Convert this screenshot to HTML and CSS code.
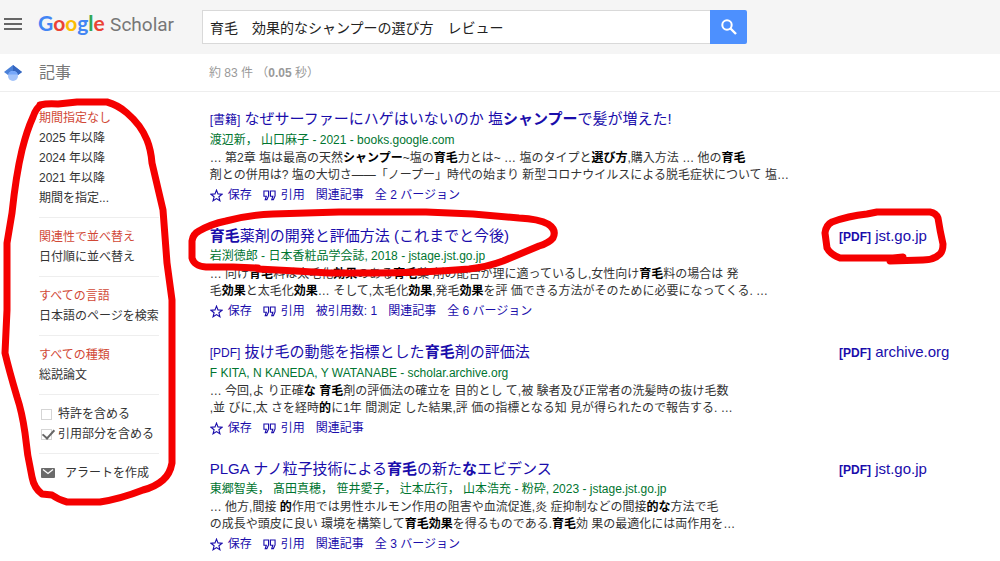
FILE: index.html
```html
<!DOCTYPE html>
<html lang="ja">
<head>
    <meta charset="UTF-8">
    <meta name="viewport" content="width=device-width, initial-scale=1.0">
    <title>Google Scholar</title>
    <link rel="stylesheet" href="styles.css">
</head>
<body>

    <!-- Shared icons -->
    <svg class="sprite" aria-hidden="true">
        <symbol id="star" viewBox="0 0 14 14">
            <path d="M7 1.2l1.6 4.1 4.4.3-3.4 2.8 1.1 4.3L7 10.3l-3.7 2.4 1.1-4.3L1 5.6l4.4-.3z" fill="none" stroke="currentColor" stroke-width="1.2"/>
        </symbol>
        <symbol id="quote" viewBox="0 0 14 14">
            <path d="M1 2.2h5v5.2L4.2 11.4H2.4L3.6 7.8H1zM8 2.2h5v5.2l-1.8 4H9.4l1.2-3.6H8z" fill="none" stroke="currentColor" stroke-width="1.2"/>
        </symbol>
    </svg>

    <header class="header">
        <div class="header-left">
            <button class="menu-btn" type="button" aria-label="メニュー">
                <svg width="18" height="14" viewBox="0 0 18 14"><path d="M0 2h18M0 7h18M0 12h18" stroke="#666" stroke-width="2"/></svg>
            </button>
            <a class="logo" href="#"><span class="google"><span class="blue">G</span><span class="red">o</span><span class="yellow">o</span><span class="blue">g</span><span class="green">l</span><span class="red">e</span></span> <span class="scholar">Scholar</span></a>
        </div>
        <form class="search">
            <input type="text" name="q" aria-label="検索" value="育毛　効果的なシャンプーの選び方　レビュー">
            <button type="submit" aria-label="検索">
                <svg width="18" height="18" viewBox="0 0 18 18"><circle cx="7" cy="7" r="4.7" fill="none" stroke="#fff" stroke-width="2"/><path d="M10.5 10.5l5.5 5.5" stroke="#fff" stroke-width="2.4"/></svg>
            </button>
        </form>
    </header>

    <div class="subheader">
        <div class="section-name">
            <svg width="18" height="18" viewBox="0 0 18 18">
                <path d="M9 1L0 8l4 3h10l4-3z" fill="#4a80d8"/>
                <path d="M9 1v7l5 3 4-3z" fill="#3566c0"/>
                <circle cx="9" cy="12" r="5" fill="#a3c3fa"/>
                <path d="M4.3 10.4a5 5 0 0 1 9.4 0z" fill="#76a7fa"/>
            </svg>
            <span>記事</span>
        </div>
        <div class="count">約 83 件 （<b>0.05</b> 秒）</div>
    </div>

    <main class="main">
        <nav class="sidebar">
            <ul>
                <li><a class="selected" href="#">期間指定なし</a></li>
                <li><a href="#">2025 年以降</a></li>
                <li><a href="#">2024 年以降</a></li>
                <li><a href="#">2021 年以降</a></li>
                <li><a href="#">期間を指定...</a></li>
            </ul>
            <ul>
                <li><a class="selected" href="#">関連性で並べ替え</a></li>
                <li><a href="#">日付順に並べ替え</a></li>
            </ul>
            <ul>
                <li><a class="selected" href="#">すべての言語</a></li>
                <li><a href="#">日本語のページを検索</a></li>
            </ul>
            <ul>
                <li><a class="selected" href="#">すべての種類</a></li>
                <li><a href="#">総説論文</a></li>
            </ul>
            <ul>
                <li><label><input type="checkbox">特許を含める</label></li>
                <li><label><input type="checkbox" checked>引用部分を含める</label></li>
            </ul>
            <ul>
                <li><a class="alert" href="#">
                    <svg width="14" height="10" viewBox="0 0 14 10"><rect width="14" height="10" rx="1" fill="#6b6b6b"/><path d="M2 1.5l5 4 5-4" fill="none" stroke="#fff" stroke-width="1.3"/></svg>
                    アラートを作成</a></li>
            </ul>
            <svg class="mark mark-sidebar" width="180" height="412" viewBox="0 98 180 412" aria-hidden="true">
                <path d="M40 105Q48 103 58 104L77 102H107Q118 105 127 113Q141 125 147 140Q151 150 152 163L163 210L167 263L172 300V463Q170 474 163 480Q155 487 143 490Q120 499 100 502H67Q59 500 52 495L42 494Q34 488 32 477Q27 455 25 433Q22 412 17 397Q9 370 5 353L7 310V243L12 213Q16 175 22 150Q27 130 33 117Q36 108 41 105"/>
            </svg>
        </nav>

        <div class="results">
            <article class="result">
                <div class="result-body">
                    <h3><span class="type">[書籍]</span> <a href="#">なぜサーファーにハゲはいないのか 塩<b>シャンプー</b>で髪が増えた!</a></h3>
                    <div class="meta">渡辺新， 山口麻子 - 2021 - books.google.com</div>
                    <p>… 第2章 塩は最高の天然<b>シャンプー</b>~塩の<b>育毛</b>力とは~ … 塩のタイプと<b>選び方</b>,購入方法 … 他の<b>育毛</b><br>剤との併用は? 塩の大切さ――「ノープー」時代の始まり 新型コロナウイルスによる脱毛症状について 塩…</p>
                    <div class="links">
                        <a href="#"><svg class="icon"><use href="#star"/></svg>保存</a>
                        <a href="#"><svg class="icon"><use href="#quote"/></svg>引用</a>
                        <a href="#">関連記事</a>
                        <a href="#">全 2 バージョン</a>
                    </div>
                </div>
            </article>

            <article class="result">
                <div class="result-body">
                    <h3><a href="#"><b>育毛</b>薬剤の開発と評価方法 (これまでと今後)</a></h3>
                    <div class="meta">岩渕徳郎 - 日本香粧品学会誌, 2018 - jstage.jst.go.jp</div>
                    <p>… 向け<b>育毛</b>料は太毛化<b>効果</b>のある<b>育毛</b>薬 剤の配合が理に適っているし,女性向け<b>育毛</b>料の場合は 発<br>毛<b>効果</b>と太毛化<b>効果</b>… そして,太毛化<b>効果</b>,発毛<b>効果</b>を評 価できる方法がそのために必要になってくる. …</p>
                    <div class="links">
                        <a href="#"><svg class="icon"><use href="#star"/></svg>保存</a>
                        <a href="#"><svg class="icon"><use href="#quote"/></svg>引用</a>
                        <a href="#">被引用数: 1</a>
                        <a href="#">関連記事</a>
                        <a href="#">全 6 バージョン</a>
                    </div>
                    <svg class="mark mark-title" width="375" height="75" viewBox="185 205 375 75" aria-hidden="true">
                        <path d="M257 267L232 266H205Q193 265 191 257V240Q192 233 198 230Q210 223 225 220Q248 214 272 213L338 211H425L472 213L518 217Q538 218 547 223Q556 229 552 237Q548 242 538 245L502 260Q486 266 468 268Q420 272 372 272H328L295 270L257 268"/>
                    </svg>
                </div>
                <div class="source">
                    <a href="#"><b>[PDF]</b> jst.go.jp</a>
                    <svg class="mark mark-source" width="130" height="60" viewBox="820 205 130 60" aria-hidden="true">
                        <path d="M903 256L893 257H840Q830 253 827 247L825 232Q826 224 832 221Q848 215 867 213L877 211H930Q936 212 938 217Q940 230 943 243Q943 250 940 253Q934 259 923 259L890 260"/>
                    </svg>
                </div>
            </article>

            <article class="result">
                <div class="result-body">
                    <h3><span class="type">[PDF]</span> <a href="#">抜け毛の動態を指標とした<b>育毛</b>剤の評価法</a></h3>
                    <div class="meta">F KITA, N KANEDA, Y WATANABE - scholar.archive.org</div>
                    <p>… 今回,よ り正確<b>な</b> <b>育毛</b>剤の評価法の確立を 目的とし て,被 験者及び正常者の洗髪時の抜け毛数<br>,並 びに,太 さを経時<b>的</b>に1年 間測定 した結果,評 価の指標となる知 見が得られたので報告する. …</p>
                    <div class="links">
                        <a href="#"><svg class="icon"><use href="#star"/></svg>保存</a>
                        <a href="#"><svg class="icon"><use href="#quote"/></svg>引用</a>
                        <a href="#">関連記事</a>
                    </div>
                </div>
                <div class="source">
                    <a href="#"><b>[PDF]</b> archive.org</a>
                </div>
            </article>

            <article class="result">
                <div class="result-body">
                    <h3><a href="#">PLGA ナノ粒子技術による<b>育毛</b>の新た<b>な</b>エビデンス</a></h3>
                    <div class="meta">東郷智美， 髙田真穂， 笹井愛子， 辻本広行， 山本浩充 - 粉砕, 2023 - jstage.jst.go.jp</div>
                    <p>… 他方,間接 <b>的</b>作用では男性ホルモン作用の阻害や血流促進,炎 症抑制などの間接<b>的な</b>方法で毛<br>の成長や頭皮に良い 環境を構築して<b>育毛効果</b>を得るものである.<b>育毛</b>効 果の最適化には両作用を…</p>
                    <div class="links">
                        <a href="#"><svg class="icon"><use href="#star"/></svg>保存</a>
                        <a href="#"><svg class="icon"><use href="#quote"/></svg>引用</a>
                        <a href="#">関連記事</a>
                        <a href="#">全 3 バージョン</a>
                    </div>
                </div>
                <div class="source">
                    <a href="#"><b>[PDF]</b> jst.go.jp</a>
                </div>
            </article>
        </div>
    </main>

</body>
</html>
```

FILE: styles.css
```css
* {
    box-sizing: border-box;
}
body {
    font-family: "Liberation Sans", "Noto Sans CJK JP", sans-serif;
    font-size: 12px;
    line-height: 20px;
    color: #333;
    background-color: #fff;
    margin: 0;
}
a {
    color: inherit;
    text-decoration: none;
}
a:hover {
    text-decoration: underline;
}
button {
    border: none;
    padding: 0;
    cursor: pointer;
}
.sprite {
    display: none;
}

/* Header */
.header {
    display: flex;
    align-items: center;
    height: 54px;
    background-color: #f5f5f5;
}
.header-left {
    display: flex;
    align-items: center;
    flex: 0 0 202px;
    gap: 16px;
    padding-left: 4px;
    padding-bottom: 6px;
}
.menu-btn {
    display: flex;
    background: none;
}
.logo {
    font-family: Lato, sans-serif;
    font-size: 21px;
    line-height: 28px;
    white-space: nowrap;
}
.logo:hover {
    text-decoration: none;
}
.google {
    font-weight: bold;
}
.scholar {
    font-family: Roboto, sans-serif;
    font-size: 19px;
    color: #777;
}
.blue {
    color: #4285f4;
}
.red {
    color: #ea4335;
}
.yellow {
    color: #fbbc05;
}
.green {
    color: #34a853;
}
.search {
    display: flex;
    flex: 0 1 545px;
    height: 34px;
}
.search input {
    flex: 1;
    min-width: 0;
    padding: 0 7px;
    border: 1px solid #d9d9d9;
    border-right: none;
    background-color: #fff;
    color: #222;
    font-family: inherit;
    font-size: 14px;
}
.search button {
    display: flex;
    align-items: center;
    justify-content: center;
    width: 37px;
    background-color: #4d90fe;
    border-radius: 0 2px 2px 0;
}

/* Result count bar */
.subheader {
    display: flex;
    align-items: center;
    height: 38px;
    border-bottom: 1px solid #eee;
}
.section-name {
    display: flex;
    align-items: center;
    flex: 0 0 209px;
    gap: 17px;
    padding-left: 4px;
    font-size: 16px;
    color: #777;
}
.count {
    color: #999;
}

/* Page columns */
.main {
    display: flex;
}
.sidebar {
    position: relative;
    flex: 0 0 119px;
    margin: 16px 51px 0 39px;
    align-self: flex-start;
    white-space: nowrap;
}
.sidebar ul {
    list-style-type: none;
    margin: 0;
    padding: 0;
}
.sidebar ul + ul {
    margin-top: 9px;
    padding-top: 9px;
    border-top: 1px solid #eee;
}
.sidebar .selected {
    color: #d14836;
}
.sidebar label {
    display: flex;
    align-items: center;
    gap: 6px;
    padding-left: 2px;
}
.sidebar input {
    appearance: none;
    width: 11px;
    height: 11px;
    margin: 0;
    border: 1px solid #d5d5d5;
    position: relative;
}
.sidebar input:checked::after {
    content: "";
    position: absolute;
    left: 3px;
    top: -3px;
    width: 5px;
    height: 10px;
    border: solid #666;
    border-width: 0 2px 2px 0;
    transform: rotate(42deg);
}
.alert {
    display: flex;
    align-items: center;
    gap: 10px;
    padding-left: 2px;
}

/* Results */
.results {
    flex: 1;
    padding-top: 17px;
}
.result {
    display: flex;
    margin-bottom: 20px;
}
.result-body {
    position: relative;
    flex: 1;
}
.result h3 {
    margin: 0;
    font-size: 15px;
    font-weight: normal;
    color: #1a0dab;
}
.type {
    font-size: 12px;
}
.meta {
    color: #007530;
}
.result p {
    margin: 0;
    line-height: 17px;
}
.result p b {
    color: #000;
}
.links {
    display: flex;
    gap: 11px;
    line-height: 22px;
    color: #1a0dab;
}
.links a {
    display: flex;
    align-items: center;
    gap: 5px;
}
.icon {
    width: 13px;
    height: 13px;
}
.source {
    position: relative;
    flex: 0 0 161px;
    font-size: 15px;
    color: #1a0dab;
}
.source b {
    font-size: 12px;
}

/* Red pen circles */
.mark {
    position: absolute;
    fill: none;
    stroke: #f50000;
    stroke-width: 7;
    stroke-linecap: round;
    stroke-linejoin: round;
    pointer-events: none;
}
.mark-sidebar {
    left: -39px;
    top: -10px;
}
.mark-title {
    left: -24px;
    top: -20px;
}
.mark-source {
    left: -19px;
    top: -20px;
}
```
